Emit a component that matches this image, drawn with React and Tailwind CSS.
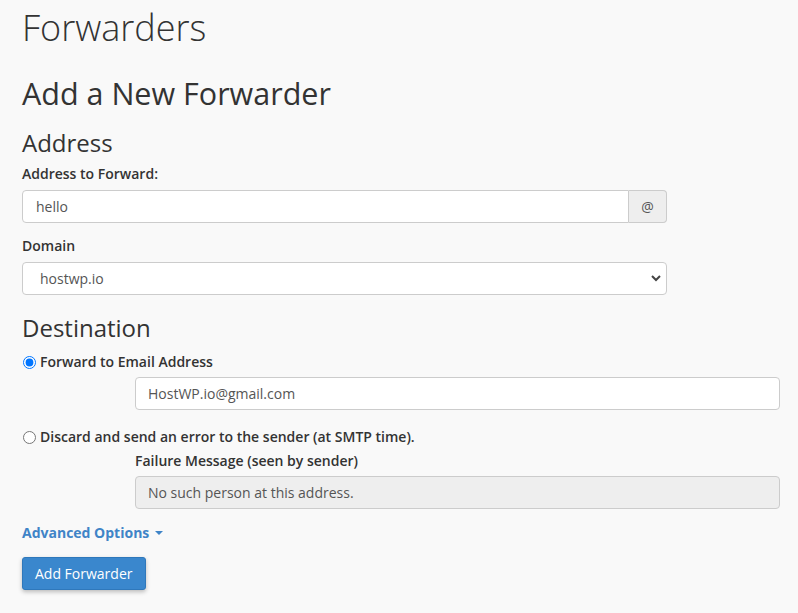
import React, { useState } from 'react';

const App = () => {
    const [dest, setDest] = useState('fwd');

    return (
        <div className="min-h-[613px] bg-[#f9f9f9] text-[#333] font-['Open_Sans',sans-serif] pl-[22px] pr-[18px] pt-[4px]">
            <h1 className="text-[36px] font-light leading-[48px] text-[#333]">Forwarders</h1>

            <h2 className="text-[30.5px] font-normal leading-[36px] mt-[23px]">Add a New Forwarder</h2>

            <h3 className="text-[24px] leading-[30px] mt-[17px]">Address</h3>

            <div className="w-[645px]">
                <label className="block text-[14px] font-semibold leading-[20px] mt-[6px]">Address to Forward:</label>
                <div className="flex mt-[6px] h-[33px]">
                    <input
                        type="text"
                        defaultValue="hello"
                        className="flex-1 border border-[#ccc] rounded-l-[4px] bg-white px-[13px] text-[14px] text-[#555] outline-none"
                    />
                    <span className="w-[38px] flex items-center justify-center border border-l-0 border-[#ccc] rounded-r-[4px] bg-[#eee] text-[14px] text-[#555]">@</span>
                </div>

                <label className="block text-[14px] font-semibold leading-[20px] mt-[13px]">Domain</label>
                <div className="relative mt-[6px] h-[33px]">
                    <select className="w-full h-full appearance-none border border-[#ccc] rounded-[4px] bg-white pl-[17px] text-[14px] text-[#555] outline-none">
                        <option>hostwp.io</option>
                    </select>
                    <svg className="absolute right-[6px] top-[12px] pointer-events-none" width="10" height="8" viewBox="0 0 10 8">
                        <path d="M1 2 L5 6 L9 2" stroke="#444" strokeWidth="2" fill="none" />
                    </svg>
                </div>
            </div>

            <h3 className="text-[24px] leading-[30px] mt-[18px]">Destination</h3>

            <label className="flex items-center mt-[9px] text-[14px] font-semibold leading-[20px] w-fit">
                <input
                    type="radio"
                    name="dest"
                    checked={dest === 'fwd'}
                    onChange={() => setDest('fwd')}
                    className="w-[13px] h-[13px] mr-[4px] ml-[1px] accent-[#0075ff]"
                />
                Forward to Email Address
            </label>
            <div className="pl-[113px] mt-[5px]">
                <input
                    type="text"
                    defaultValue="HostWP.io@gmail.com"
                    className="w-full h-[33px] border border-[#ccc] rounded-[4px] bg-white px-[12px] text-[14px] text-[#555] outline-none"
                />
            </div>

            <label className="flex items-center mt-[17px] text-[14px] font-semibold leading-[20px] w-fit">
                <input
                    type="radio"
                    name="dest"
                    checked={dest === 'fail'}
                    onChange={() => setDest('fail')}
                    className="w-[13px] h-[13px] mr-[4px] ml-[1px]"
                />
                Discard and send an error to the sender (at SMTP time).
            </label>
            <div className="pl-[113px]">
                <label className="block text-[14px] font-semibold leading-[20px] mt-[4px]">Failure Message (seen by sender)</label>
                <input
                    type="text"
                    disabled
                    defaultValue="No such person at this address."
                    className="w-full h-[33px] mt-[5px] border border-[#ccc] rounded-[4px] bg-[#eee] px-[12px] text-[14px] text-[#555] outline-none"
                />
            </div>

            <a href="#" className="inline-flex items-center mt-[14px] text-[14px] font-bold text-[#3f84c7] leading-[20px]">
                Advanced Options
                <svg className="ml-[6px]" width="8" height="5" viewBox="0 0 8 5">
                    <path d="M0 0 L8 0 L4 4 Z" fill="#3f84c7" />
                </svg>
            </a>

            <div className="mt-[13px]">
                <button className="h-[33px] px-[12px] rounded-[3px] bg-[#3a87cd] border border-[#2f78bb] text-white text-[14px] shadow-[0_2px_4px_rgba(0,0,0,0.25)]">
                    Add Forwarder
                </button>
            </div>
        </div>
    );
};

export default App;
